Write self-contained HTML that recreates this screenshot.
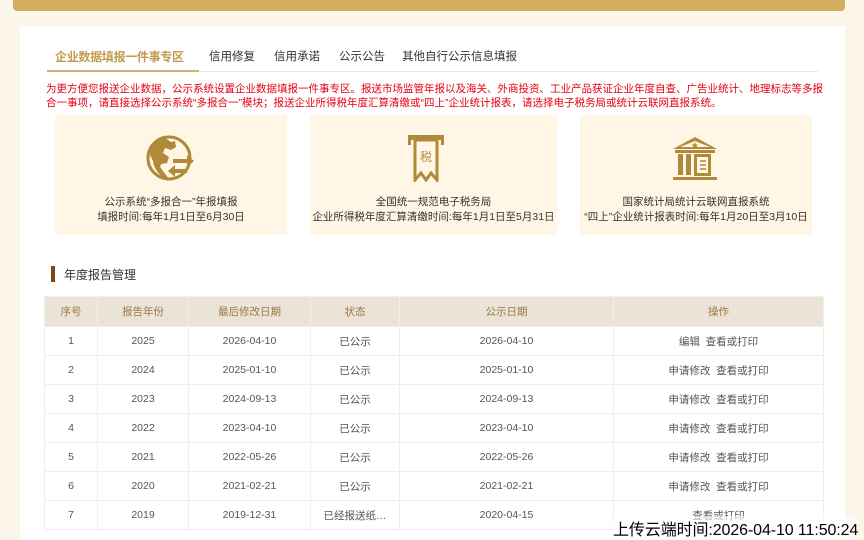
<!DOCTYPE html>
<html><head><meta charset="utf-8"><style>
*{margin:0;padding:0;box-sizing:border-box}
body{width:864px;height:540px;overflow:hidden;background:#fbf5ea;font-family:"Liberation Sans","Noto Sans CJK SC",sans-serif;position:relative}
.top{position:absolute;left:13px;top:-6px;width:832px;height:17px;background:#d3ad5e;border-radius:0 0 4px 4px}
.panel{position:absolute;left:20px;top:26px;width:825px;height:514px;background:#fff}
.tabs{position:absolute;left:27px;top:18px;width:771px;height:28px;border-bottom:1px solid #e6e6e6;font-size:11.5px;color:#333}
.tabs span{position:absolute;top:4px}
.tabs .act{color:#c19a4c;font-size:12px;top:4px;font-weight:bold;letter-spacing:-0.3px}
.ul{position:absolute;left:0;top:26px;width:152px;height:2px;background:#d3b27a}
.red{position:absolute;left:26px;top:56px;width:800px;font-size:10.5px;line-height:14px;color:#e60012;letter-spacing:0;white-space:nowrap}
.card{position:absolute;top:89px;height:120px;background:#fff6e5;text-align:center;font-size:10.5px;line-height:15px;color:#333}
.card .t{position:absolute;left:0;right:0;top:80px}
.card svg{position:absolute}
.sec{position:absolute;left:31px;top:240px;font-size:12px;color:#333;padding-left:13px}
.sec:before{content:"";position:absolute;left:0;top:0;width:4px;height:16px;background:#7a4a10}
table{position:absolute;left:24px;top:270px;border-collapse:collapse;font-size:10.5px;color:#555;text-align:center}
td,th{border:1px solid #eee;height:29px;padding:0}
th{background:#ebe3d8;color:#9b7a44;font-weight:normal;height:30px;border-color:#f3efe9}
.stamp{position:absolute;left:613px;top:516px;font-size:16px;color:#000;background:rgba(255,255,255,.6);white-space:nowrap;letter-spacing:-0.1px}
</style></head><body>
<div class="top"></div>
<div class="panel">
<div class="tabs"><span class="act" style="left:8px">企业数据填报一件事专区</span><span style="left:162px">信用修复</span><span style="left:227px">信用承诺</span><span style="left:292px">公示公告</span><span style="left:355px">其他自行公示信息填报</span><div class="ul"></div></div>
<div class="red">为更方便您报送企业数据，公示系统设置企业数据填报一件事专区。报送市场监管年报以及海关、外商投资、工业产品获证企业年度自查、广告业统计、地理标志等多报<br>合一事项，请直接选择公示系统“多报合一”模块；报送企业所得税年度汇算清缴或“四上”企业统计报表，请选择电子税务局或统计云联网直报系统。</div>
<div class="card" style="left:35px;width:232px">
<svg style="left:90px;top:18px" width="52" height="50" viewBox="0 0 52 50"><circle cx="24" cy="25" r="21" fill="none" stroke="#b0893a" stroke-width="3"/><path d="M5 22 Q6 8 20 5 L26 9 30 8 31 14 26 17 20 15 18 20 24 24 22 30 16 31 14 40 10 35 8 28Z" fill="#b0893a"/><path d="M8 30 Q14 46 24 46 L18 38 12 30Z" fill="#b0893a"/><path d="M28 26h14v-4l7 6-7 6v-4H28Z M42 36H30v-4l-7 6 7 6v-4h12Z" fill="#b0893a"/></svg>
<div class="t">公示系统“多报合一”年报填报<br>填报时间:每年1月1日至6月30日</div></div>
<div class="card" style="left:290px;width:247px">
<svg style="left:97px;top:19px" width="38" height="48" viewBox="0 0 38 48"><path d="M1 1h36v10h-3V6H4v5H1Z" fill="#b0893a"/><path d="M8 6h22v40l-6-7-5 7-5-7-6 7Z" fill="none" stroke="#b0893a" stroke-width="3"/><text x="19" y="27" font-size="12" fill="#b0893a" text-anchor="middle" font-family="Noto Sans CJK SC">税</text></svg>
<div class="t">全国统一规范电子税务局<br>企业所得税年度汇算清缴时间:每年1月1日至5月31日</div></div>
<div class="card" style="left:560px;width:232px">
<svg style="left:91px;top:20px" width="48" height="48" viewBox="0 0 48 48"><path d="M24 2 46 14H2Z M24 6 9 12h30Z" fill="#b0893a" fill-rule="evenodd"/><path d="M24 7l1 2.5h2.5l-2 1.6.8 2.5-2.3-1.5-2.3 1.5.8-2.5-2-1.6h2.5Z" fill="#b0893a"/><rect x="4" y="15" width="40" height="3" fill="#b0893a"/><rect x="7" y="19" width="5" height="21" fill="#b0893a"/><rect x="15" y="19" width="5" height="21" fill="#b0893a"/><rect x="24.5" y="20.5" width="14" height="19" fill="none" stroke="#b0893a" stroke-width="3"/><path d="M29 26h6M29 30h6M29 34h6" stroke="#b0893a" stroke-width="1.5"/><rect x="2" y="42" width="44" height="3" fill="#b0893a"/></svg>
<div class="t">国家统计局统计云联网直报系统<br>“四上”企业统计报表时间:每年1月20日至3月10日</div></div>
<div class="sec">年度报告管理</div>
<table>
<tr><th style="width:53px">序号</th><th style="width:91px">报告年份</th><th style="width:122px">最后修改日期</th><th style="width:89px">状态</th><th style="width:214px">公示日期</th><th style="width:210px">操作</th></tr>
<tr><td>1</td><td>2025</td><td>2026-04-10</td><td>已公示</td><td>2026-04-10</td><td>编辑&nbsp;&nbsp;查看或打印</td></tr>
<tr><td>2</td><td>2024</td><td>2025-01-10</td><td>已公示</td><td>2025-01-10</td><td>申请修改&nbsp;&nbsp;查看或打印</td></tr>
<tr><td>3</td><td>2023</td><td>2024-09-13</td><td>已公示</td><td>2024-09-13</td><td>申请修改&nbsp;&nbsp;查看或打印</td></tr>
<tr><td>4</td><td>2022</td><td>2023-04-10</td><td>已公示</td><td>2023-04-10</td><td>申请修改&nbsp;&nbsp;查看或打印</td></tr>
<tr><td>5</td><td>2021</td><td>2022-05-26</td><td>已公示</td><td>2022-05-26</td><td>申请修改&nbsp;&nbsp;查看或打印</td></tr>
<tr><td>6</td><td>2020</td><td>2021-02-21</td><td>已公示</td><td>2021-02-21</td><td>申请修改&nbsp;&nbsp;查看或打印</td></tr>
<tr><td>7</td><td>2019</td><td>2019-12-31</td><td>已经报送纸…</td><td>2020-04-15</td><td>查看或打印</td></tr>
</table>
</div>
<div class="stamp">上传云端时间:2026-04-10 11:50:24</div>
</body></html>
